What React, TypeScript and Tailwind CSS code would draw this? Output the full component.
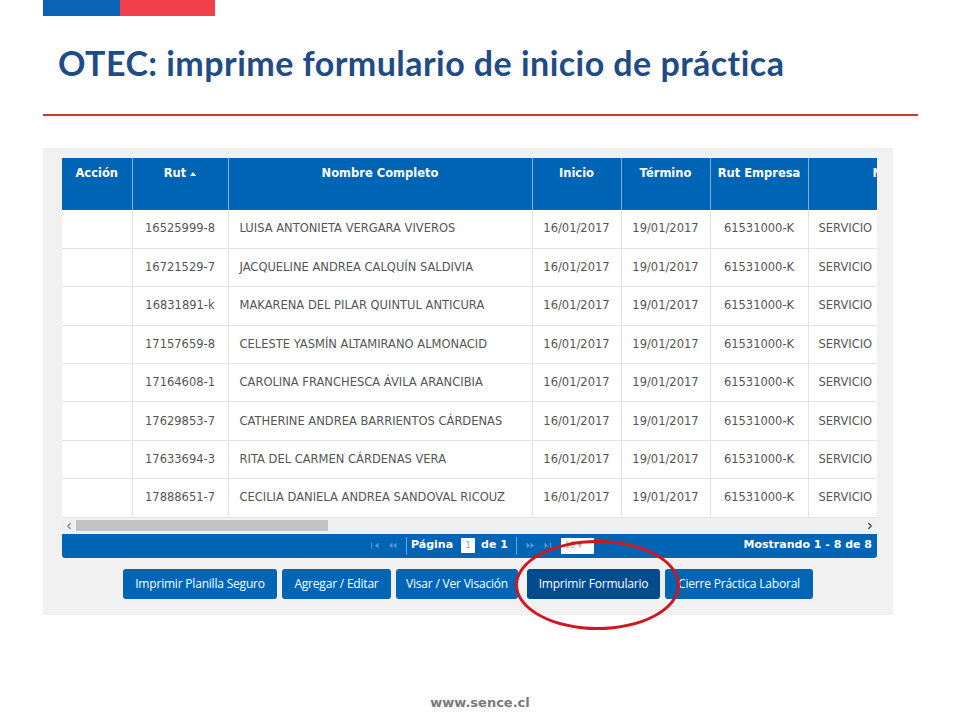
import { ChevronLeft, ChevronRight } from 'lucide-react';

const rows = [
    ['16525999-8', 'LUISA ANTONIETA VERGARA VIVEROS'],
    ['16721529-7', 'JACQUELINE ANDREA CALQUÍN SALDIVIA'],
    ['16831891-k', 'MAKARENA DEL PILAR QUINTUL ANTICURA'],
    ['17157659-8', 'CELESTE YASMÍN ALTAMIRANO ALMONACID'],
    ['17164608-1', 'CAROLINA FRANCHESCA ÁVILA ARANCIBIA'],
    ['17629853-7', 'CATHERINE ANDREA BARRIENTOS CÁRDENAS'],
    ['17633694-3', 'RITA DEL CARMEN CÁRDENAS VERA'],
    ['17888651-7', 'CECILIA DANIELA ANDREA SANDOVAL RICOUZ'],
];

const buttons = [
    { label: 'Imprimir Planilla Seguro', w: 'w-[154px]' },
    { label: 'Agregar / Editar', w: 'w-[109px]' },
    { label: 'Visar / Ver Visación', w: 'w-[122px]' },
    { label: 'Imprimir Formulario', w: 'w-[133px]', active: true },
    { label: 'Cierre Práctica Laboral', w: 'w-[148px]' },
];

const PagerIcon = ({ dir, end }: { dir: 'l' | 'r'; end?: boolean }) => (
    <svg width="10" height="7" viewBox="0 0 10 7" className="opacity-40">
        {dir === 'l' ? (
            <>
                {end ? <rect x="1" y="0.5" width="1.2" height="6" fill="#cfe3f5" /> : <polygon points="1,3.5 4.5,0.5 4.5,6.5" fill="#cfe3f5" />}
                <polygon points="5,3.5 8.5,0.5 8.5,6.5" fill="#cfe3f5" />
            </>
        ) : (
            <>
                <polygon points="1.5,0.5 5,3.5 1.5,6.5" fill="#cfe3f5" />
                {end ? <rect x="7" y="0.5" width="1.2" height="6" fill="#cfe3f5" /> : <polygon points="5.5,0.5 9,3.5 5.5,6.5" fill="#cfe3f5" />}
            </>
        )}
    </svg>
);

export default function App() {
    return (
        <div className="relative w-[960px] h-[720px] bg-white overflow-hidden font-['Lato',sans-serif]">
            {/* Flag bar */}
            <div className="flex ml-[43px] h-4">
                <div className="w-[77px] bg-[#0b63b6]" />
                <div className="w-[95px] bg-[#f0404a]" />
            </div>

            {/* Title */}
            <h1 className="ml-[58px] mt-[27px] text-[34px] leading-[40px] font-bold text-[#1f4b86] tracking-[0.45px] whitespace-nowrap">
                OTEC: imprime formulario de inicio de práctica
            </h1>

            {/* Red rule */}
            <div className="ml-[43px] mt-[31px] w-[875px] h-[2px] bg-[#c83a2e] shadow-[0_2px_2px_rgba(200,180,230,0.3)]" />

            {/* Screenshot panel */}
            <div className="ml-[43px] mt-[32px] w-[850px] h-[467px] bg-[#f1f1f1] pt-[10px] pl-[19px] font-['DejaVu_Sans',sans-serif]">
                <div className="w-[815px]">
                    <div className="overflow-hidden">
                        <table className="w-[900px] border-collapse table-fixed text-[11.5px]">
                            <colgroup>
                                <col className="w-[70px]" />
                                <col className="w-[96px]" />
                                <col className="w-[304px]" />
                                <col className="w-[89px]" />
                                <col className="w-[89px]" />
                                <col className="w-[98px]" />
                                <col className="w-[154px]" />
                            </colgroup>
                            <thead>
                                <tr className="h-[52px] bg-[#0064b4] text-white font-bold">
                                    {['Acción', 'Rut', 'Nombre Completo', 'Inicio', 'Término', 'Rut Empresa', 'Nombre Empresa'].map((h, i) => (
                                        <th
                                            key={h}
                                            className={`align-top pt-[7px] px-1 border-x border-[#7fb0dc] font-bold whitespace-nowrap first:border-l-0 ${i === 6 ? 'text-left pl-[64px]' : 'text-center'}`}
                                        >
                                            {i === 1 ? (
                                                <span className="inline-flex items-center gap-[4px]">
                                                    Rut
                                                    <svg width="6" height="4" viewBox="0 0 6 4">
                                                        <polygon points="0,4 3,0 6,4" fill="#fff" />
                                                    </svg>
                                                </span>
                                            ) : (
                                                h
                                            )}
                                        </th>
                                    ))}
                                </tr>
                            </thead>
                            <tbody className="text-[#555]">
                                {rows.map(([rut, name]) => (
                                    <tr key={rut} className="h-[38.4px] bg-white border-b border-[#e3e3e3]">
                                        <td className="border-r border-[#e3e3e3]" />
                                        <td className="border-r border-[#e3e3e3] text-center">{rut}</td>
                                        <td className="border-r border-[#e3e3e3] pl-[11px] whitespace-nowrap">{name}</td>
                                        <td className="border-r border-[#e3e3e3] text-center">16/01/2017</td>
                                        <td className="border-r border-[#e3e3e3] text-center">19/01/2017</td>
                                        <td className="border-r border-[#e3e3e3] text-center">61531000-K</td>
                                        <td className="pl-[10px] whitespace-nowrap">SERVICIO</td>
                                    </tr>
                                ))}
                            </tbody>
                        </table>
                    </div>

                    {/* Horizontal scrollbar */}
                    <div className="flex items-center h-4 bg-[#f0f0f0]">
                        <ChevronLeft className="w-[10px] h-[10px] text-[#888] mx-[2px]" strokeWidth={3} />
                        <div className="w-[252px] h-[11px] bg-[#c2c2c2]" />
                        <div className="flex-1" />
                        <ChevronRight className="w-[10px] h-[10px] text-[#444] mx-[2px]" strokeWidth={3} />
                    </div>

                    {/* Pager */}
                    <div className="relative flex items-center h-6 bg-[#0064b4] rounded-b-[3px] text-white text-[11px] font-bold">
                        <div className="flex items-center ml-[308px] gap-[8px]">
                            <PagerIcon dir="l" end />
                            <PagerIcon dir="l" />
                            <div className="w-px h-[18px] bg-[#6aa6da]" />
                            <span className="-ml-[4px]">Página</span>
                            <div className="w-[14px] h-[15px] bg-white text-[#999] text-[8px] font-normal flex items-center justify-center">1</div>
                            <span className="-ml-[2px]">de 1</span>
                            <div className="w-px h-[18px] bg-[#6aa6da]" />
                            <PagerIcon dir="r" />
                            <PagerIcon dir="r" end />
                            <div className="w-[33px] h-[16px] bg-white text-[#b5b5b5] text-[8px] font-normal flex items-center pl-[4px]">10 ▾</div>
                        </div>
                        <span className="ml-auto mr-[5px]">Mostrando 1 - 8 de 8</span>
                    </div>
                </div>

                {/* Action buttons */}
                <div className="flex gap-[5px] ml-[61px] mt-[11px] font-['Open_Sans',sans-serif]">
                    {buttons.map((b) => (
                        <button
                            key={b.label}
                            className={`${b.w} h-[30px] rounded-[3px] text-white text-[12px] tracking-[-0.2px] ${b.active ? 'bg-[#004c8d] ml-[4px]' : 'bg-[#0066b3]'}`}
                        >
                            {b.label}
                        </button>
                    ))}
                </div>
            </div>

            {/* Red ellipse highlight */}
            <div className="absolute left-[515px] top-[540px] w-[165px] h-[90px] rounded-[50%] border-[3px] border-[#cc1820] pointer-events-none" />

            {/* Footer */}
            <div className="absolute left-0 right-0 top-[693px] text-center text-[13px] font-bold text-[#7a7a7a] font-['DejaVu_Sans',sans-serif]">
                www.sence.cl
            </div>
        </div>
    );
}
